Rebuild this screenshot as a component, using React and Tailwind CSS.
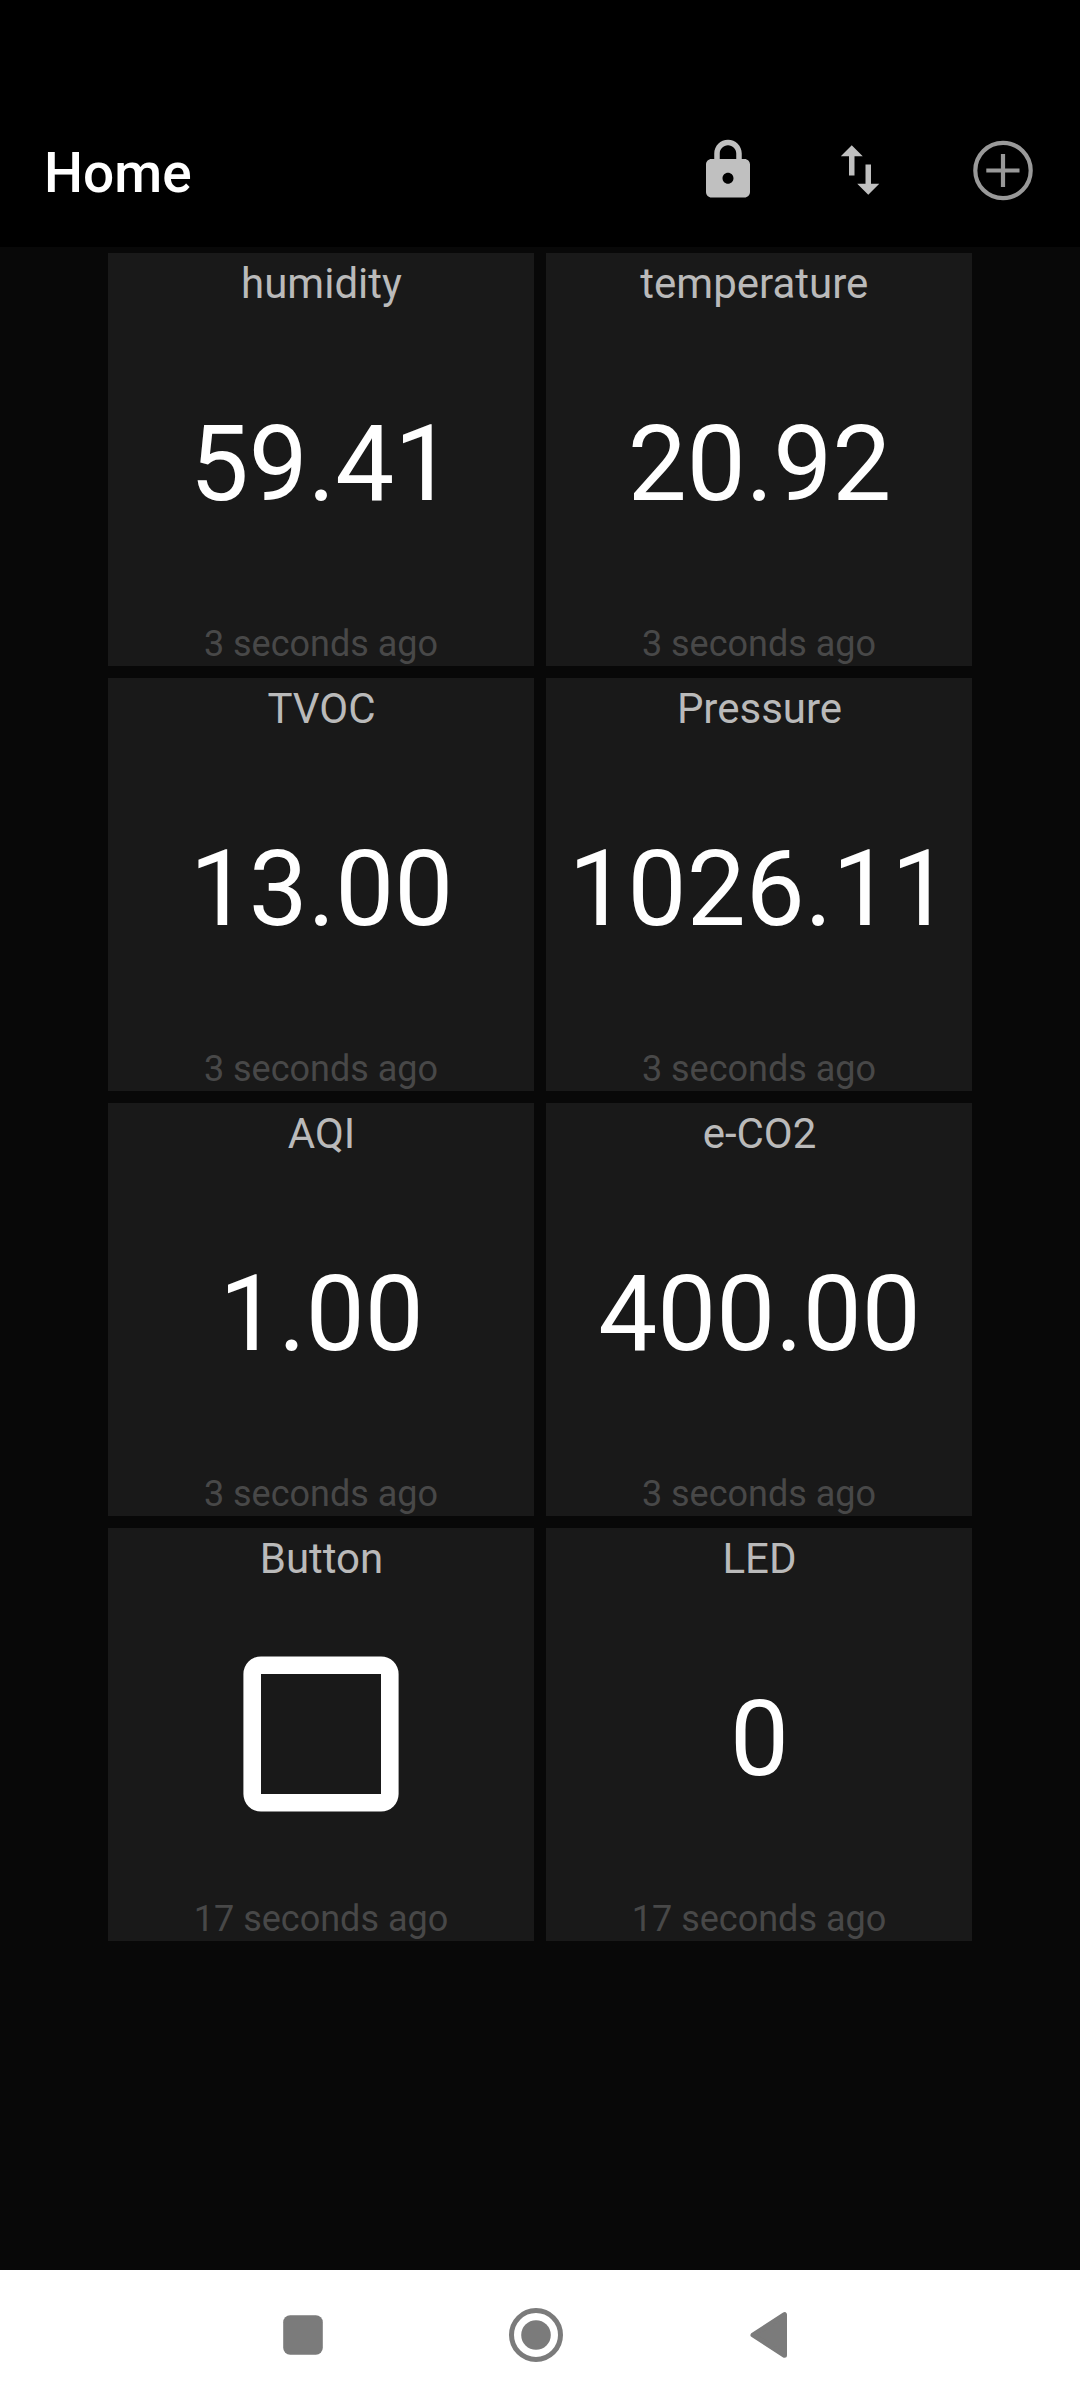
const tiles = [
  ['humidity', '59.41', '3 seconds ago'],
  ['temperature ', '20.92', '3 seconds ago'],
  ['TVOC', '13.00', '3 seconds ago'],
  ['Pressure', '1026.11', '3 seconds ago'],
  ['AQI', '1.00', '3 seconds ago'],
  ['e-CO2', '400.00', '3 seconds ago'],
  ['Button', null, '17 seconds ago'],
  ['LED', '0', '17 seconds ago'],
];

function Tile({ title, value, time }) {
  return (
    <section className="flex h-[413px] flex-col items-center overflow-hidden bg-[#191919]">
      <h2 className="mt-[6px] whitespace-pre pl-px text-[42px] leading-[50px] text-[#bababa]">{title}</h2>
      {value === null ? (
        <svg className="mt-[72px]" width="156" height="156" viewBox="0 0 156 156">
          <path
            fill="#fff"
            fillRule="evenodd"
            d="M18 .4H138A17.600 17.600 0 0 1 155.600 18V138A17.600 17.600 0 0 1 138 155.600H18A17.600 17.600 0 0 1 .4 138V18A17.600 17.600 0 0 1 18 .4ZM18 18V138H138V18Z"
          />
        </svg>
      ) : (
        <p className="mt-[96px] pl-px text-[105px] leading-[120px] text-white">{value}</p>
      )}
      <p className="mt-auto text-[36px] leading-[44px] text-[#484848]">{time}</p>
    </section>
  );
}

export default function App() {
  return (
    <div className="flex h-[2400px] w-[1080px] flex-col bg-[#080808] font-['Roboto',sans-serif]">
      <header className="flex h-[247px] items-start bg-black pl-[44px] pr-[44px] pt-[137px]">
        <h1 className="mt-[5px] flex-1 text-[55px] font-medium leading-[62px] text-white">Home</h1>
        <button aria-label="Lock" className="mr-[66px]">
          <svg width="66" height="66" viewBox="0 0 24 24" fill="#c0c0c0">
            <path d="M18 8h-1V6c0-2.760-2.240-5-5-5S7 3.240 7 6v2H6c-1.100 0-2 .9-2 2v10c0 1.100.9 2 2 2h12c1.100 0 2-.9 2-2V10c0-1.100-.9-2-2-2zm-6 9c-1.100 0-2-.9-2-2s.9-2 2-2 2 .9 2 2-.9 2-2 2zm3-9H9V6c0-1.660 1.340-3 3-3s3 1.340 3 3v2z" />
          </svg>
        </button>
        <button aria-label="Reorder" className="mr-[77px]">
          <svg width="66" height="66" viewBox="0 0 24 24" fill="#c0c0c0">
            <path d="M9 3L5 6.990h3V14h2V6.990h3L9 3zm7 14.010V10h-2v7.010h-3L15 21l4-3.990h-3z" />
          </svg>
        </button>
        <button aria-label="Add">
          <svg width="66" height="66" viewBox="0 0 66 66" fill="none" stroke="#999" strokeWidth="4.200">
            <circle cx="33" cy="33.500" r="27.700" />
            <path d="M16.300 33.500H49.500M33 16.900V50.100" />
          </svg>
        </button>
      </header>
      <main className="grid flex-1 grid-cols-[426px_426px] content-start justify-center gap-3 pt-[6px]">
        {tiles.map(([title, value, time]) => (
          <Tile key={title} title={title} value={value} time={time} />
        ))}
      </main>
      <nav className="flex h-[130px] items-center justify-center gap-[173px] bg-white pr-[8px]">
        <svg width="60" height="60" viewBox="0 0 60 60" fill="#7b7b7b">
          <rect x="10.200" y="10.200" width="39.600" height="39.600" rx="7" />
        </svg>
        <svg width="60" height="60" viewBox="0 0 60 60" fill="#7b7b7b">
          <circle cx="30" cy="30" r="24.500" fill="none" stroke="#7b7b7b" strokeWidth="5" />
          <circle cx="30" cy="30" r="14.800" />
        </svg>
        <svg width="60" height="60" viewBox="0 0 60 60" fill="#7b7b7b" stroke="#7b7b7b" strokeWidth="5" strokeLinejoin="round">
          <path d="M14 30L45.500 9.700V50.300Z" />
        </svg>
      </nav>
    </div>
  );
}
